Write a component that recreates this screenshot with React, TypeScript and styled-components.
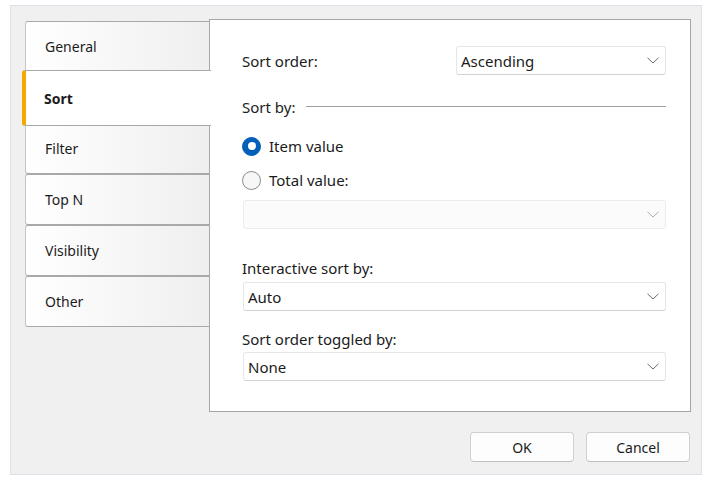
import React from 'react';
import styled, { createGlobalStyle } from 'styled-components';

const GlobalStyle = createGlobalStyle`
  html, body {
    margin: 0;
    padding: 0;
    background: #ffffff;
  }
  body {
    font-family: "Noto Sans", "Open Sans", "DejaVu Sans", sans-serif;
    font-size: 14px;
    color: #1b1b1b;
  }
  * {
    box-sizing: border-box;
  }
`;

const Window = styled.div`
  margin: 5px 0 0 10px;
  width: 692px;
  height: 470px;
  border: 1px solid #dce1e9;
  background: #f0f0f0;
  padding: 13px 10px 0 14px;
  display: flex;
  flex-direction: column;
`;

const Body = styled.div`
  display: flex;
  align-items: flex-start;
`;

const TabList = styled.div`
  width: 185px;
  padding-top: 2px;
  display: flex;
  flex-direction: column;
`;

const Tab = styled.div<{ $active?: boolean }>`
  position: relative;
  display: flex;
  align-items: center;
  height: ${(p) => (p.$active ? '56px' : '51px')};
  margin: ${(p) => (p.$active ? '-2px 0 -3px -3px' : '0')};
  padding-left: ${(p) => (p.$active ? '18px' : '19px')};
  border: 1px solid #a9a9a9;
  border-left-color: ${(p) => (p.$active ? '#f5a800' : '#c4c4c4')};
  border-left-width: ${(p) => (p.$active ? '4px' : '1px')};
  border-right-width: ${(p) => (p.$active ? '0' : '1px')};
  border-radius: 3px 0 0 3px;
  background: ${(p) =>
    p.$active ? '#ffffff' : 'linear-gradient(to right, #ffffff, #efefef)'};
  font-weight: ${(p) => (p.$active ? 700 : 400)};
  z-index: ${(p) => (p.$active ? 2 : 1)};
  ${(p) => (p.$active ? 'width: 189px;' : '')}
`;

const Panel = styled.div`
  margin-left: -1px;
  width: 482px;
  height: 393px;
  background: #ffffff;
  border: 1px solid #a5a5a5;
  padding: 26px 24px 0 32px;
  display: flex;
  flex-direction: column;
  font-size: 15px;
`;

const FieldRow = styled.div<{ $top?: number }>`
  display: flex;
  align-items: center;
  min-height: 20px;
  margin-top: ${(p) => p.$top ?? 0}px;
`;

const Label = styled.span`
  flex: 1;
  white-space: nowrap;
  line-height: 20px;
`;

const GroupTitle = styled.span`
  white-space: nowrap;
  margin-right: 11px;
  line-height: 20px;
`;

const Rule = styled.div`
  flex: 1;
  height: 1px;
  background: #a0a0a0;
  margin-top: -2px;
`;

const Select = styled.div<{ $width?: number; $disabled?: boolean; $top?: number }>`
  display: flex;
  align-items: center;
  justify-content: space-between;
  height: 29px;
  flex-shrink: 0;
  width: ${(p) => (p.$width ? `${p.$width}px` : 'auto')};
  margin-top: ${(p) => p.$top ?? 0}px;
  margin-left: ${(p) => (p.$width ? 0 : 1)}px;
  padding: 0 6px 0 4px;
  background: ${(p) => (p.$disabled ? '#fbfbfb' : '#ffffff')};
  border: 1px solid ${(p) => (p.$disabled ? '#ececec' : '#e6e6e6')};
  border-bottom-color: ${(p) => (p.$disabled ? '#ececec' : '#d2d2d2')};
  border-radius: 3px;
  color: #1b1b1b;
`;

const Chevron = ({ color }: { color: string }) => (
  <svg width="12" height="7" viewBox="0 0 12 7" fill="none">
    <path d="M0.5 0.8 L6 6 L11.5 0.8" stroke={color} strokeWidth="1" />
  </svg>
);

const RadioRow = styled.label<{ $top?: number }>`
  display: flex;
  align-items: center;
  gap: 8px;
  height: 20px;
  flex-shrink: 0;
  margin-top: ${(p) => p.$top ?? 0}px;
`;

const RadioDot = styled.span<{ $checked?: boolean }>`
  width: 19px;
  height: 19px;
  border-radius: 50%;
  display: flex;
  align-items: center;
  justify-content: center;
  background: ${(p) => (p.$checked ? '#005fb8' : '#f7f7f7')};
  border: 1px solid ${(p) => (p.$checked ? '#005fb8' : '#8a8a8a')};
  &::after {
    content: '';
    display: ${(p) => (p.$checked ? 'block' : 'none')};
    width: 8px;
    height: 8px;
    border-radius: 50%;
    background: #ffffff;
  }
`;

const Footer = styled.div`
  display: flex;
  justify-content: flex-end;
  gap: 12px;
  margin-top: 20px;
  padding-right: 1px;
`;

const Button = styled.button`
  width: 104px;
  height: 30px;
  border: 1px solid #d0d0d0;
  border-bottom-color: #c0c0c0;
  border-radius: 4px;
  background: #fdfdfd;
  font: inherit;
  color: #1b1b1b;
`;

const tabs = ['General', 'Sort', 'Filter', 'Top N', 'Visibility', 'Other'];

export default function App() {
  return (
    <>
      <GlobalStyle />
      <Window>
        <Body>
          <TabList>
            {tabs.map((t) => (
              <Tab key={t} $active={t === 'Sort'}>
                {t}
              </Tab>
            ))}
          </TabList>
          <Panel>
            <FieldRow>
              <Label>Sort order:</Label>
              <Select $width={210}>
                Ascending
                <Chevron color="#6a6a6a" />
              </Select>
            </FieldRow>
            <FieldRow $top={22}>
              <GroupTitle>Sort by:</GroupTitle>
              <Rule />
            </FieldRow>
            <RadioRow $top={19}>
              <RadioDot $checked />
              Item value
            </RadioRow>
            <RadioRow $top={14}>
              <RadioDot />
              Total value:
            </RadioRow>
            <Select $disabled $top={10}>
              <span />
              <Chevron color="#b0b0b0" />
            </Select>
            <FieldRow $top={29}>
              <Label>Interactive sort by:</Label>
            </FieldRow>
            <Select $top={4}>
              Auto
              <Chevron color="#6a6a6a" />
            </Select>
            <FieldRow $top={18}>
              <Label>Sort order toggled by:</Label>
            </FieldRow>
            <Select $top={3}>
              None
              <Chevron color="#6a6a6a" />
            </Select>
          </Panel>
        </Body>
        <Footer>
          <Button>OK</Button>
          <Button>Cancel</Button>
        </Footer>
      </Window>
    </>
  );
}
